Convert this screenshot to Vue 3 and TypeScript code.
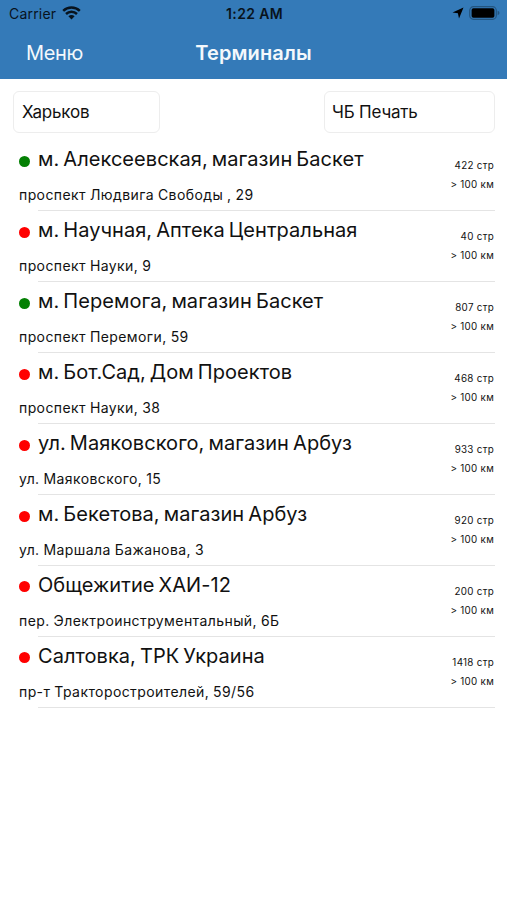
<script setup lang="ts">
interface Terminal {
  name: string
  address: string
  pages: number
  online: boolean
}

const terminals: Terminal[] = [
  { name: 'м. Алексеевская, магазин Баскет', address: 'проспект Людвига Свободы , 29', pages: 422, online: true },
  { name: 'м. Научная, Аптека Центральная', address: 'проспект Науки, 9', pages: 40, online: false },
  { name: 'м. Перемога, магазин Баскет', address: 'проспект Перемоги, 59', pages: 807, online: true },
  { name: 'м. Бот.Сад, Дом Проектов', address: 'проспект Науки, 38', pages: 468, online: false },
  { name: 'ул. Маяковского, магазин Арбуз', address: 'ул. Маяковского, 15', pages: 933, online: false },
  { name: 'м. Бекетова, магазин Арбуз', address: 'ул. Маршала Бажанова, 3', pages: 920, online: false },
  { name: 'Общежитие ХАИ-12', address: 'пер. Электроинструментальный, 6Б', pages: 200, online: false },
  { name: 'Салтовка, ТРК Украина', address: 'пр-т Тракторостроителей, 59/56', pages: 1418, online: false },
]
</script>

<template>
  <div class="screen">
    <header class="header">
      <div class="status">
        <div class="carrier">
          <span>Carrier</span>
          <svg class="wifi" width="19" height="14" viewBox="0 0 19 14">
            <path d="M1.2 4.8C5.8.5 13.2.5 17.8 4.8" />
            <path d="M4 8C7.1 5.1 11.9 5.1 15 8" />
            <path class="solid" d="M9.5 13.4L6.4 10.3C8.1 8.7 10.9 8.7 12.6 10.3Z" />
          </svg>
        </div>
        <span class="time">1:22 AM</span>
        <div class="indicators">
          <svg width="12" height="12" viewBox="0 0 12 12">
            <path d="M11.5.5L7 11.4L5.9 6.2L.5 5.6Z" />
          </svg>
          <svg width="31" height="14" viewBox="0 0 31 14">
            <rect class="shell" x=".7" y=".7" width="26.6" height="12.6" rx="3.8" />
            <rect x="2.6" y="2.2" width="22.8" height="9.6" rx="1.8" />
            <path class="tip" d="M28.6 4.8Q30.5 5.4 30.5 7T28.6 9.2Z" />
          </svg>
        </div>
      </div>
      <nav class="nav">
        <span class="menu">Меню</span>
        <h1 class="title">Терминалы</h1>
      </nav>
    </header>

    <div class="filters">
      <div class="field city">Харьков</div>
      <div class="field service">ЧБ Печать</div>
    </div>

    <ul class="list">
      <li v-for="t in terminals" :key="t.name" class="row">
        <div class="info">
          <div class="heading">
            <span class="dot" :class="{ online: t.online }"></span>
            <span class="name">{{ t.name }}</span>
          </div>
          <div class="address">{{ t.address }}</div>
        </div>
        <div class="meta">
          <span>{{ t.pages }} стр</span>
          <span>&gt; 100 км</span>
        </div>
        <div class="divider"></div>
      </li>
    </ul>
  </div>
</template>

<style>
body {
  background: #fff;
}
</style>

<style scoped>
.screen {
  width: 507px;
  height: 900px;
  overflow: hidden;
  background: #fff;
  color: #111;
  font-family: Inter, 'Noto Sans', sans-serif;
}

.header {
  height: 79px;
  background: #347ab8;
}

.status {
  display: grid;
  grid-template-columns: 1fr auto 1fr;
  align-items: center;
  height: 27px;
  padding: 0 7px 0 9px;
  color: #08131d;
  font-size: 14px;
  letter-spacing: 0.2px;
}

.carrier {
  display: flex;
  align-items: center;
  gap: 6px;
}

.wifi {
  margin-top: -2px;
  fill: none;
  stroke: #08131d;
  stroke-width: 2.5;
}

.wifi .solid {
  fill: #08131d;
  stroke: none;
}

.time {
  font-weight: 600;
  letter-spacing: 0.35px;
}

.indicators {
  display: flex;
  justify-content: flex-end;
  align-items: center;
  gap: 5px;
  margin-top: -1px;
  fill: #000;
}

.shell {
  fill: none;
  stroke: #235580;
  stroke-width: 1.2;
}

.tip {
  fill: #235580;
}

.nav {
  display: grid;
  grid-template-columns: 1fr auto 1fr;
  align-items: center;
  height: 52px;
  padding: 0 26px;
  color: #f3f8fc;
  line-height: 26px;
}

.menu {
  font-size: 20px;
  letter-spacing: -0.35px;
}

.title {
  margin: 0;
  font-size: 20px;
  font-weight: 600;
  letter-spacing: 0.12px;
}

.filters {
  display: flex;
  justify-content: space-between;
  padding: 12px 12px 0 13px;
}

.field {
  box-sizing: border-box;
  height: 42px;
  padding-left: 8px;
  border: 1px solid #ededed;
  border-radius: 6px;
  font-size: 17px;
  line-height: 41px;
  letter-spacing: -0.2px;
}

.city {
  width: 147px;
}

.service {
  width: 171px;
  padding-left: 7px;
}

.list {
  margin: 7.4px 0 0;
  padding: 0;
  list-style: none;
}

.row {
  display: grid;
  grid-template-columns: 1fr auto;
  grid-template-rows: 1fr 1px;
  height: 70.93px;
  padding: 0 12px 0 19px;
}

.heading {
  display: flex;
  align-items: center;
  gap: 8px;
  height: 38px;
}

.dot {
  width: 11px;
  height: 11px;
  margin-top: 4px;
  border-radius: 50%;
  background: #f00;
}

.dot.online {
  background: #048004;
}

.name {
  font-size: 20px;
  line-height: 26px;
  letter-spacing: 0.05px;
  word-spacing: -1.6px;
  white-space: nowrap;
}

.address {
  height: 30px;
  font-size: 14px;
  line-height: 33px;
  letter-spacing: 0.41px;
  word-spacing: -0.4px;
  white-space: nowrap;
}

.meta {
  height: 54px;
  padding: 16px 1px 0 0;
  box-sizing: border-box;
  font-size: 9.8px;
  line-height: 19px;
  letter-spacing: 0.3px;
  text-align: right;
}

.meta span {
  display: block;
}

.divider {
  grid-column: 1 / -1;
  height: 1px;
  margin-left: 19px;
  background: #e4e4e4;
}
</style>
